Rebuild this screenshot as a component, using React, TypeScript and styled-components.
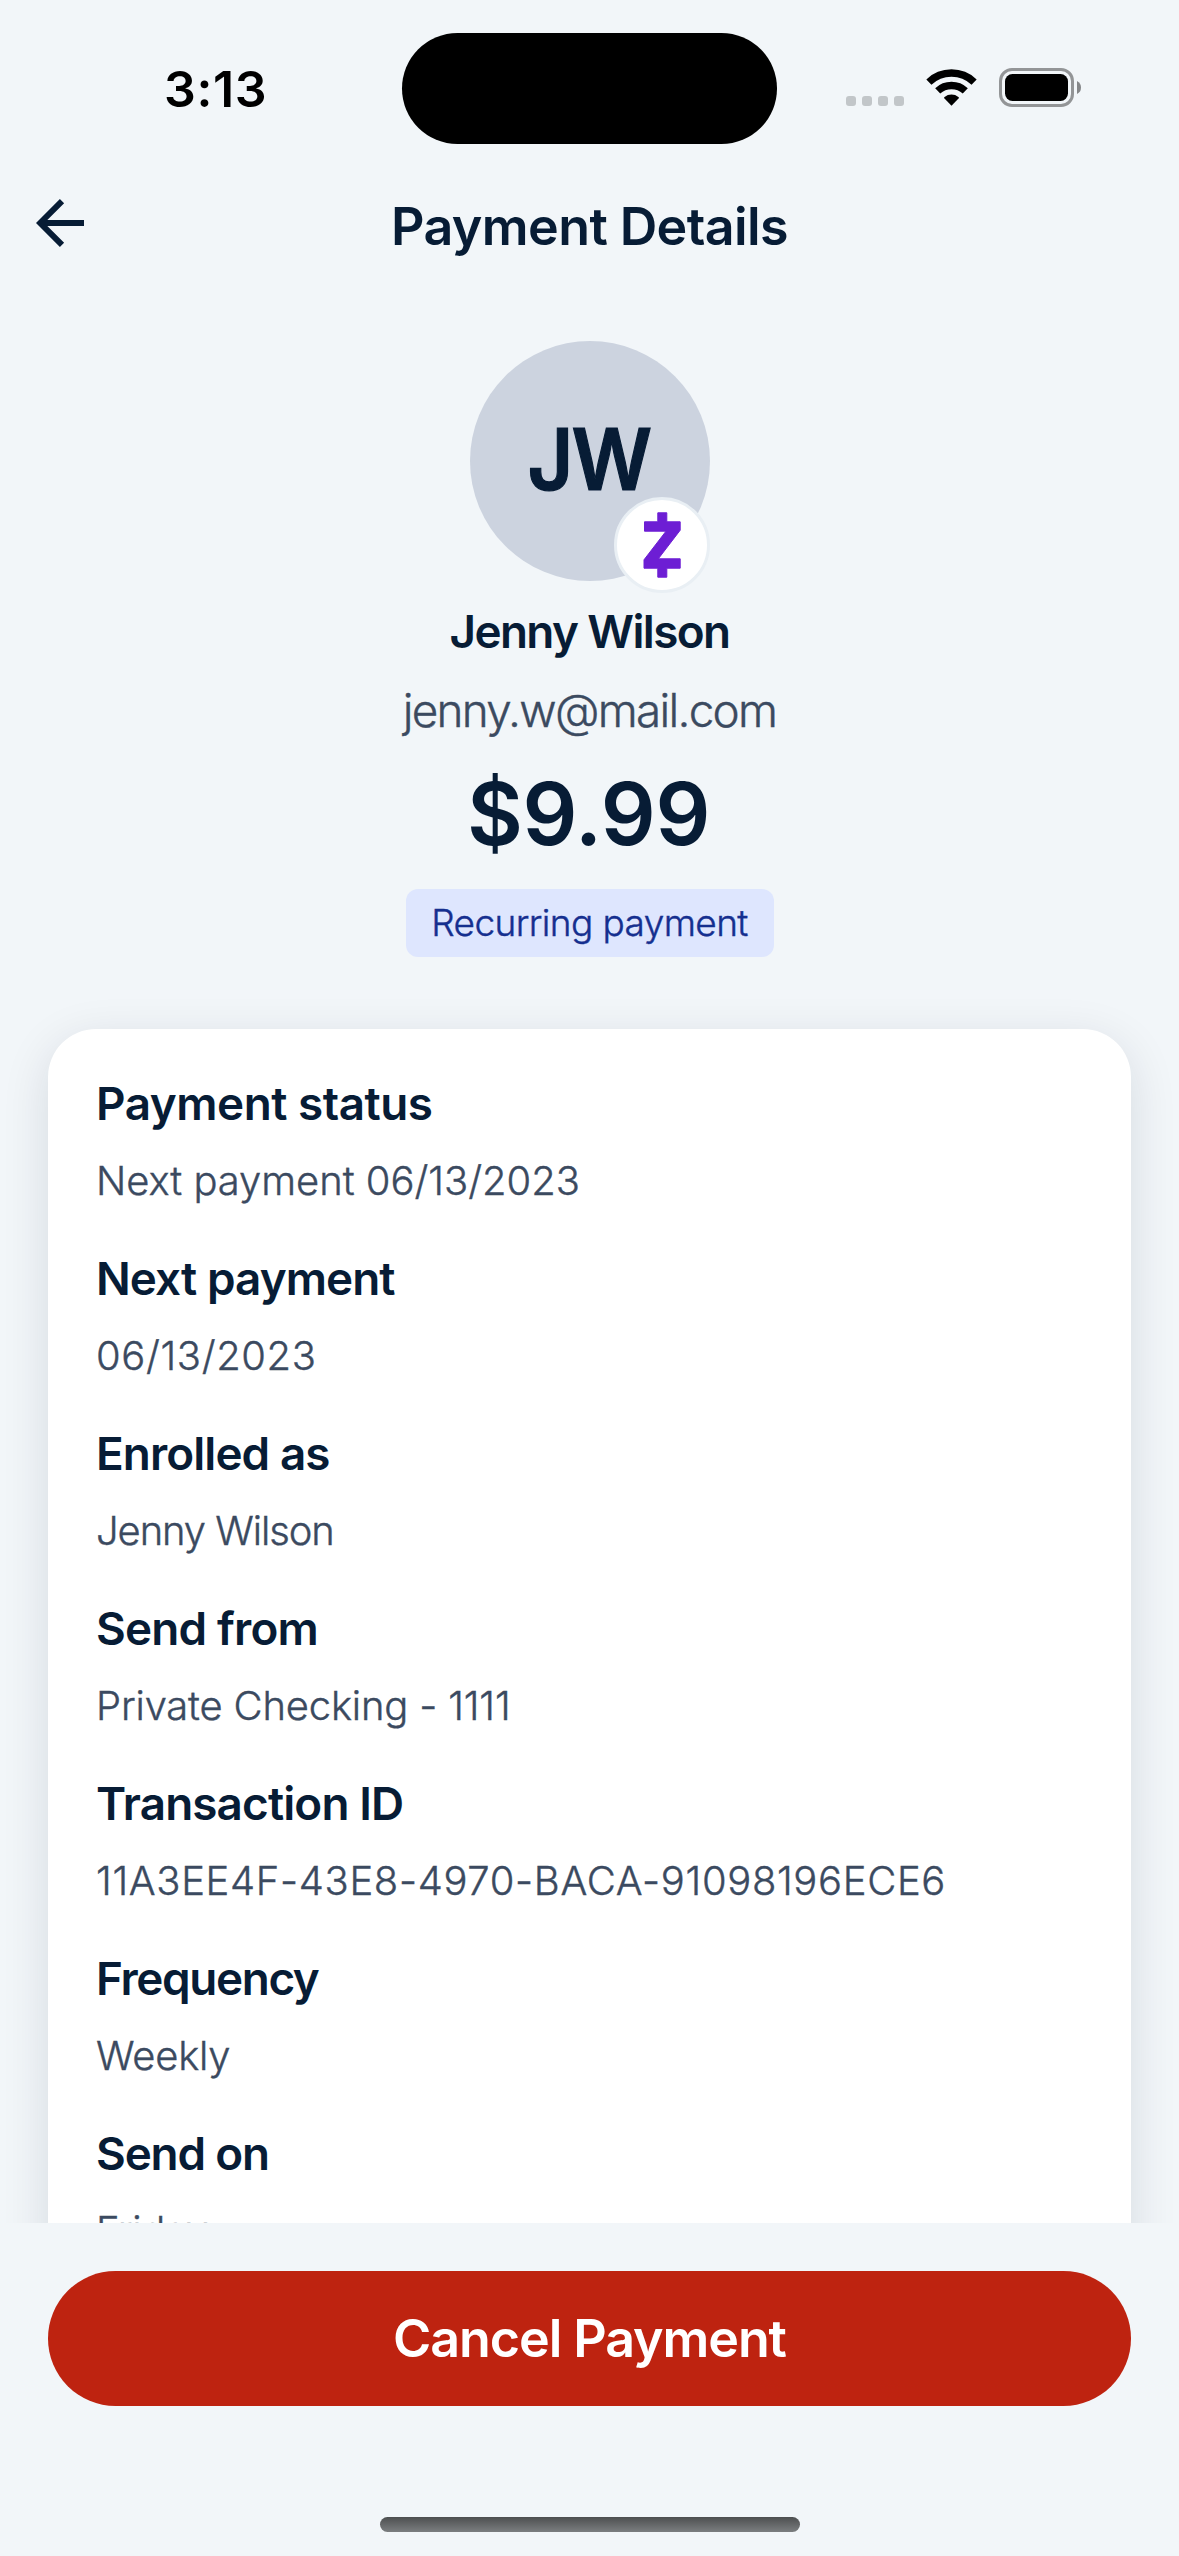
import React from "react";
import styled, { createGlobalStyle } from "styled-components";

const GlobalStyle = createGlobalStyle`
  *, *::before, *::after { box-sizing: border-box; }
  body {
    margin: 0;
    background: #f2f6f9;
    font-family: Inter, "Liberation Sans", sans-serif;
    color: #071c35;
  }
`;

const Screen = styled.div`
  display: flex;
  flex-direction: column;
  width: 1179px;
  height: 2556px;
  overflow: hidden;
  background: #f2f6f9;
`;

const StatusBar = styled.div`
  display: grid;
  grid-template-columns: 402px 375px 402px;
  align-items: center;
  flex: none;
  height: 177px;
`;

const Clock = styled.div`
  padding-left: 164px;
  font-size: 50px;
  font-weight: 600;
  line-height: 60px;
  letter-spacing: 0.6px;
  color: #000;
`;

const Island = styled.div`
  height: 111px;
  margin-top: 0.6px;
  border-radius: 56px;
  background: #000;
`;

const StatusIcons = styled.div`
  display: flex;
  align-items: center;
  gap: 22px;
  padding-left: 69px;
`;

const NavBar = styled.header`
  display: grid;
  grid-template-columns: 120px 1fr 120px;
  align-items: center;
  flex: none;
  height: 98px;
`;

const BackButton = styled.button`
  display: flex;
  width: 84px;
  height: 60px;
  margin: -6px 0 0;
  padding: 0 0 0 36px;
  align-items: center;
  border: 0;
  background: none;
  color: #071c35;
`;

const Title = styled.h1`
  margin: 2px 0 0;
  text-align: center;
  font-size: 52px;
  font-weight: 600;
  line-height: 64px;
  letter-spacing: -0.6px;
`;

const Scroll = styled.main`
  flex: 1;
  min-height: 0;
  overflow: hidden;
`;

const Hero = styled.section`
  display: flex;
  flex-direction: column;
  align-items: center;
  padding: 66px 0 72px;
`;

const Avatar = styled.div`
  position: relative;
  display: flex;
  width: 240px;
  height: 240px;
  align-items: center;
  justify-content: center;
  border-radius: 50%;
  background: #ccd3df;
`;

const Initials = styled.span`
  margin: -2px 2px 0 0;
  font-size: 85px;
  font-weight: 600;
  line-height: 96px;
  letter-spacing: -2px;
  transform: scaleX(0.93);
  -webkit-text-stroke: 1.2px currentColor;
`;

const Badge = styled.div`
  position: absolute;
  right: 0;
  bottom: -12px;
  width: 96px;
  height: 96px;
  border: 3px solid #e9eff4;
  border-radius: 50%;
  background: #fff;
`;

const Name = styled.h2`
  margin: 21px 0 0;
  font-size: 45.8px;
  font-weight: 600;
  line-height: 60px;
  letter-spacing: -1.6px;
`;

const Email = styled.div`
  margin-top: 19px;
  font-size: 45.8px;
  font-weight: 300;
  line-height: 60px;
  letter-spacing: -1.7px;
  color: #3b4a60;
  -webkit-text-stroke: 0.4px currentColor;
`;

const Amount = styled.div`
  margin: 25px 2px 0 0;
  font-size: 86px;
  font-weight: 600;
  line-height: 96px;
  letter-spacing: -0.4px;
`;

const Chip = styled.div`
  margin-top: 27px;
  width: 368px;
  height: 68px;
  border-radius: 12px;
  background: #dee6fe;
  text-align: center;
  font-size: 37px;
  font-weight: 300;
  line-height: 68px;
  letter-spacing: -0.6px;
  color: #152f8f;
  -webkit-text-stroke: 0.4px currentColor;
`;

const Card = styled.section`
  display: flex;
  flex-direction: column;
  gap: 44px;
  height: 1700px;
  margin: 0 48px;
  padding: 45px 48px;
  border-radius: 48px;
  background: #fff;
  box-shadow: 0 12px 48px rgba(9, 24, 53, 0.12);
`;

const Field = styled.div`
  display: flex;
  flex-direction: column;
  gap: 23px;
`;

const Label = styled.div<{ $tracking: number }>`
  font-size: 45.8px;
  font-weight: 600;
  line-height: 60px;
  letter-spacing: ${(p) => p.$tracking}px;
`;

const Value = styled.div<{ $tracking: number }>`
  font-size: 39.9px;
  font-weight: 300;
  line-height: 48px;
  letter-spacing: ${(p) => p.$tracking}px;
  color: #3b4a60;
  -webkit-text-stroke: 0.4px currentColor;
`;

const Footer = styled.footer`
  display: flex;
  flex-direction: column;
  flex: none;
  align-items: center;
  justify-content: space-between;
  height: 333px;
  padding: 48px 48px 24px;
  background: #f2f6f9;
`;

const CancelButton = styled.button`
  width: 100%;
  height: 135px;
  padding: 0;
  border: 0;
  border-radius: 68px;
  background: #be2310;
  color: #fff;
  font-family: inherit;
  font-size: 52px;
  font-weight: 600;
  line-height: 64px;
  letter-spacing: -1.1px;
`;

const HomeIndicator = styled.div`
  width: 420px;
  height: 15px;
  border-radius: 8px;
  background: linear-gradient(#4d4f50, #7b7e80);
`;

const SignalDots = styled.svg`
  margin-top: 25px;
`;

const WifiMark = styled.svg`
  margin-top: -2px;
`;

const BatteryMark = styled.svg`
  margin-top: -2px;
`;

const fields = [
  { label: "Payment status", lt: -0.45, value: "Next payment 06/13/2023", vt: 0 },
  { label: "Next payment", lt: -0.9, value: "06/13/2023", vt: 0.65 },
  { label: "Enrolled as", lt: -0.9, value: "Jenny Wilson", vt: -1.05 },
  { label: "Send from", lt: -0.8, value: "Private Checking - 1111", vt: -0.15 },
  { label: "Transaction ID", lt: -0.85, value: "11A3EE4F-43E8-4970-BACA-91098196ECE6", vt: 0.69 },
  { label: "Frequency", lt: -1.35, value: "Weekly", vt: -0.2 },
  { label: "Send on", lt: -1.15, value: "Friday", vt: -0.3 },
];

export default function App() {
  return (
    <>
      <GlobalStyle />
      <Screen>
        <StatusBar>
          <Clock>3:13</Clock>
          <Island />
          <StatusIcons>
            <SignalDots width="58" height="10" viewBox="0 0 58 10" fill="#c2c6c9">
              {[0, 16, 32, 48].map((x) => (
                <rect key={x} x={x} width="10" height="10" rx="3" />
              ))}
            </SignalDots>
            <WifiMark width="51" height="37" viewBox="0 0 51 37">
              <g fill="none" stroke="#000" strokeWidth="7.4">
                <path d="M2.9 13.1A32.8 32.8 0 0 1 48.1 13.1" />
                <path d="M11.7 21.9A20.2 20.2 0 0 1 39.3 21.9" />
              </g>
              <path d="M25.5 36.8L18 29.1Q18 28.4 18.6 27.9A11.2 11.2 0 0 1 32.4 27.9Q33 28.4 33 29.1Z" fill="#000" />
            </WifiMark>
            <BatteryMark width="82" height="39" viewBox="0 0 82 39">
              <rect x="1.5" y="1.5" width="72" height="36" rx="11.5" fill="none" stroke="#939597" strokeWidth="3" />
              <rect x="6" y="6" width="63" height="27" rx="7.5" fill="#000" />
              <path d="M78 13Q82 15 82 19.5T78 26Z" fill="#858789" />
            </BatteryMark>
          </StatusIcons>
        </StatusBar>

        <NavBar>
          <BackButton aria-label="Back">
            <svg width="48" height="48" viewBox="0 0 48 48" fill="none" stroke="currentColor" strokeWidth="6">
              <path d="M48 24H6M26 2.2L4.2 24L26 45.8" />
            </svg>
          </BackButton>
          <Title>Payment Details</Title>
        </NavBar>

        <Scroll>
          <Hero>
            <Avatar>
              <Initials>JW</Initials>
              <Badge>
                <svg width="90" height="90" viewBox="7 20 90 90" fill="#6d1ed4" stroke="#6d1ed4" strokeLinejoin="round">
                  <path d="M34.5 41.8H47.8V32.8H56.8V41.8H70.2V50.2L48.3 78.8H70.2V88.2H56.8V97.2H47.8V88.2H34V79.8L56 51.2H34.5Z" />
                </svg>
              </Badge>
            </Avatar>
            <Name>Jenny Wilson</Name>
            <Email>jenny.w@mail.com</Email>
            <Amount>$9.99</Amount>
            <Chip>Recurring payment</Chip>
          </Hero>
          <Card>
            {fields.map((f) => (
              <Field key={f.label}>
                <Label $tracking={f.lt}>{f.label}</Label>
                <Value $tracking={f.vt}>{f.value}</Value>
              </Field>
            ))}
          </Card>
        </Scroll>

        <Footer>
          <CancelButton>Cancel Payment</CancelButton>
          <HomeIndicator />
        </Footer>
      </Screen>
    </>
  );
}
